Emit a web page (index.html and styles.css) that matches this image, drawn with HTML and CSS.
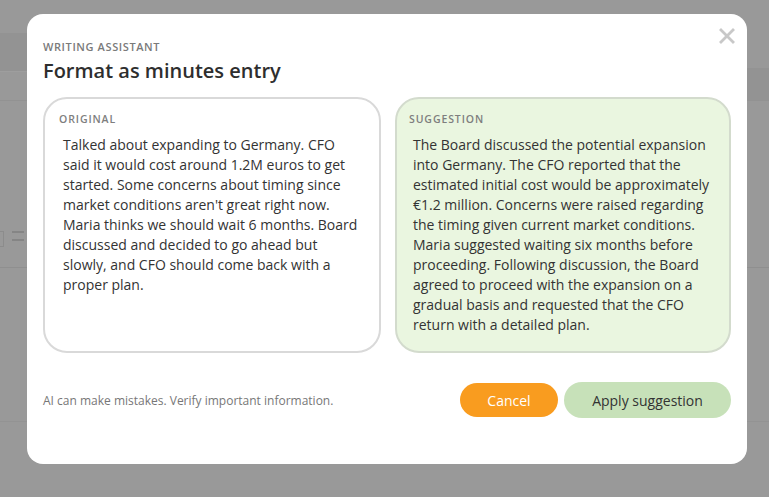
FILE: index.html
```html
<!DOCTYPE html>
<html lang="en">
<head>
<meta charset="utf-8">
<title>Format as minutes entry</title>
<link rel="stylesheet" href="styles.css">
</head>
<body>
<div class="app">
  <div class="app-top"></div>
  <div class="app-band">
    <div class="band-left"></div>
    <div class="band-right"></div>
  </div>
  <div class="app-content">
    <div class="app-tools"><span class="tool-box"></span><span class="tool-icon"></span></div>
  </div>
  <div class="app-lower"></div>
</div>
<div class="overlay">
  <div class="modal" role="dialog" aria-labelledby="dlg-title">
    <button class="close" aria-label="Close">
      <svg width="16" height="16" viewBox="0 0 16 16"><path d="M2 2 L14 14 M14 2 L2 14" stroke="#c8c8c8" stroke-width="2.8" stroke-linecap="square"/></svg>
    </button>
    <div class="eyebrow">WRITING ASSISTANT</div>
    <h1 class="title" id="dlg-title">Format as minutes entry</h1>
    <div class="compare">
      <section class="panel">
        <div class="panel-label">ORIGINAL</div>
        <p class="panel-text">Talked about expanding to Germany. CFO said it would cost around 1.2M euros to get started. Some concerns about timing since market conditions aren't great right now. Maria thinks we should wait 6 months. Board discussed and decided to go ahead but slowly, and CFO should come back with a proper plan.</p>
      </section>
      <section class="panel panel-suggest">
        <div class="panel-label">SUGGESTION</div>
        <p class="panel-text">The Board discussed the potential expansion into Germany. The CFO reported that the estimated initial cost would be approximately €1.2 million. Concerns were raised regarding the timing given current market conditions. Maria suggested waiting six months before proceeding. Following discussion, the Board agreed to proceed with the expansion on a gradual basis and requested that the CFO return with a detailed plan.</p>
      </section>
    </div>
    <div class="footer">
      <div class="disclaimer">AI can make mistakes. Verify important information.</div>
      <div class="actions">
        <button class="btn btn-cancel">Cancel</button>
        <button class="btn btn-apply">Apply suggestion</button>
      </div>
    </div>
  </div>
</div>
</body>
</html>
```

FILE: styles.css
```css
* { box-sizing: border-box; }
html, body { margin: 0; padding: 0; }
body {
  width: 769px;
  height: 497px;
  overflow: hidden;
  background: #999999;
  font-family: "Open Sans", "Noto Sans", "Liberation Sans", sans-serif;
  color: #333;
}
.app { display: flex; flex-direction: column; height: 497px; }
.app-top { height: 33px; }
.app-band { height: 68px; display: flex; border-bottom: 1px solid #929292; }
.band-left { width: 40px; height: 39px; background: #939393; border-bottom: 1px solid #9e9e9e; }
.band-right { flex: 1; margin-top: 35px; background: #939393; }
.app-content { height: 167px; border-bottom: 1px solid #8f8f8f; display: flex; align-items: flex-end; padding-bottom: 20px; }
.app-tools { display: flex; gap: 8px; }
.tool-box { width: 4px; height: 16px; border: 1px solid #8c8c8c; border-left: 0; }
.tool-icon { width: 12px; height: 10px; border-top: 2px solid #858585; border-bottom: 2px solid #858585; }
.app-lower { height: 154px; border-bottom: 1px solid #939393; }

.overlay {
  position: fixed;
  inset: 0;
  display: flex;
  justify-content: flex-start;
  padding: 14px 0 0 27px;
}
.modal {
  position: relative;
  width: 720px;
  height: 450px;
  background: #fff;
  border-radius: 16px;
  padding: 25px 16px 0 16px;
}
.close {
  position: absolute;
  top: 13px;
  right: 11px;
  width: 18px;
  height: 18px;
  padding: 0;
  border: 0;
  background: none;
  display: flex;
  align-items: center;
  justify-content: center;
}
.eyebrow {
  font-size: 11px;
  line-height: 16px;
  font-weight: 600;
  letter-spacing: 0.6px;
  color: #7a7a7a;
}
.title {
  margin: 2px 0 0 0;
  font-size: 20px;
  line-height: 28px;
  font-weight: 600;
  color: #2e2e2e;
}
.compare {
  margin-top: 12px;
  display: grid;
  grid-template-columns: 338px 336px;
  gap: 14px;
}
.panel {
  border: 2px solid #d9d9d9;
  border-radius: 24px;
  padding: 12px 14px 15px 14px;
  min-height: 256px;
  background: #fff;
}
.panel-suggest {
  background: #eaf6e0;
  border-color: #d3dbcd;
  padding-left: 12px;
}
.panel-label {
  font-size: 10.5px;
  line-height: 16px;
  font-weight: 600;
  letter-spacing: 0.9px;
  color: #7e7e7e;
}
.panel-text {
  margin: 8px 0 0 0;
  padding: 0 2px 0 4px;
  font-size: 14px;
  line-height: 20px;
  color: #333;
}
.footer {
  margin-top: 29px;
  display: flex;
  align-items: center;
  justify-content: space-between;
}
.disclaimer {
  font-size: 12px;
  color: #777;
}
.actions { display: flex; align-items: center; gap: 6px; }
.btn {
  border: 0;
  border-radius: 18px;
  font-family: inherit;
  font-size: 14px;
  cursor: pointer;
}
.btn-cancel {
  width: 98px;
  height: 34px;
  background: #f99c1f;
  color: #fff;
}
.btn-apply {
  width: 167px;
  height: 36px;
  background: #c7e1b9;
  color: #333;
}
```
